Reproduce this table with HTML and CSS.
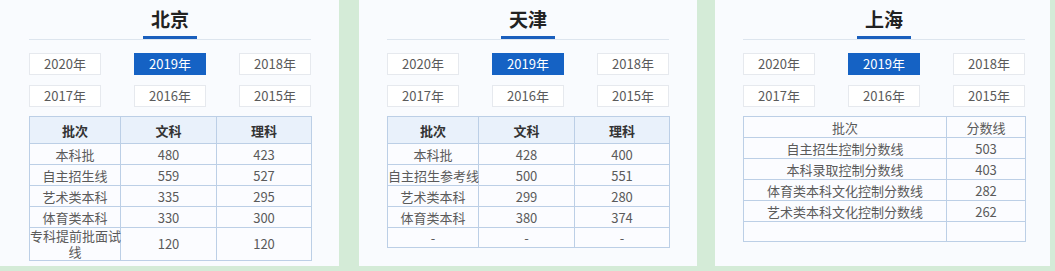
FILE: index.html
```html
<!DOCTYPE html>
<html lang="zh">
<head>
<meta charset="utf-8">
<title>分数线</title>
<link rel="stylesheet" href="styles.css">
</head>
<body>
<div class="board">
  <section class="panel p1">
    <div class="title-wrap"><h2 class="title">北京</h2></div>
    <div class="years">
      <span class="year">2020年</span><span class="year active">2019年</span><span class="year">2018年</span>
      <span class="year">2017年</span><span class="year">2016年</span><span class="year">2015年</span>
    </div>
    <table class="score three">
      <colgroup><col class="c1"><col class="c2"><col class="c3"></colgroup>
      <thead><tr><th>批次</th><th>文科</th><th>理科</th></tr></thead>
      <tbody>
        <tr><td>本科批</td><td>480</td><td>423</td></tr>
        <tr><td>自主招生线</td><td>559</td><td>527</td></tr>
        <tr><td>艺术类本科</td><td>335</td><td>295</td></tr>
        <tr><td>体育类本科</td><td>330</td><td>300</td></tr>
        <tr class="tall"><td>专科提前批面试<br>线</td><td>120</td><td>120</td></tr>
      </tbody>
    </table>
  </section>
  <section class="panel p2">
    <div class="title-wrap"><h2 class="title">天津</h2></div>
    <div class="years">
      <span class="year">2020年</span><span class="year active">2019年</span><span class="year">2018年</span>
      <span class="year">2017年</span><span class="year">2016年</span><span class="year">2015年</span>
    </div>
    <table class="score three">
      <colgroup><col class="c1"><col class="c2"><col class="c3"></colgroup>
      <thead><tr><th>批次</th><th>文科</th><th>理科</th></tr></thead>
      <tbody>
        <tr><td>本科批</td><td>428</td><td>400</td></tr>
        <tr><td>自主招生参考线</td><td>500</td><td>551</td></tr>
        <tr><td>艺术类本科</td><td>299</td><td>280</td></tr>
        <tr><td>体育类本科</td><td>380</td><td>374</td></tr>
        <tr class="dash"><td>-</td><td>-</td><td>-</td></tr>
      </tbody>
    </table>
  </section>
  <section class="panel p3">
    <div class="title-wrap"><h2 class="title">上海</h2></div>
    <div class="years">
      <span class="year">2020年</span><span class="year active">2019年</span><span class="year">2018年</span>
      <span class="year">2017年</span><span class="year">2016年</span><span class="year">2015年</span>
    </div>
    <table class="score two">
      <colgroup><col class="w1"><col class="w2"></colgroup>
      <tbody>
        <tr><td>批次</td><td>分数线</td></tr>
        <tr><td>自主招生控制分数线</td><td>503</td></tr>
        <tr><td>本科录取控制分数线</td><td>403</td></tr>
        <tr><td>体育类本科文化控制分数线</td><td>282</td></tr>
        <tr><td>艺术类本科文化控制分数线</td><td>262</td></tr>
        <tr class="empty"><td></td><td></td></tr>
      </tbody>
    </table>
  </section>
</div>
</body>
</html>
```
FILE: styles.css
```css
* { box-sizing: border-box; }
html, body {
  margin: 0;
  padding: 0;
  background: #d4ebd7;
  font-family: "Noto Sans CJK SC", "Microsoft YaHei", sans-serif;
  color: #5a5a5a;
}
.board {
  display: flex;
  align-items: flex-start;
  height: 271px;
  overflow: hidden;
}
.panel {
  background: #f9fbfe;
  height: 266px;
  padding-top: 6px;
}
.p1 { width: 339px; padding-left: 29px; }
.p2 { width: 338px; margin-left: 20px; padding-left: 28px; }
.p3 { width: 335px; margin-left: 18px; padding-left: 28px; }

.title-wrap {
  width: 282px;
  border-bottom: 1px solid #dde5ee;
  display: flex;
  justify-content: center;
}
.title {
  margin: 0;
  width: 54px;
  text-align: center;
  font-size: 19px;
  line-height: 26px;
  font-weight: bold;
  color: #222;
  padding-bottom: 4px;
  border-bottom: 3px solid #1a5fbd;
}
.years {
  width: 282px;
  margin-top: 13px;
  display: grid;
  grid-template-columns: 72px 72px 72px;
  justify-content: space-between;
  row-gap: 10px;
}
.year {
  height: 22px;
  line-height: 20px;
  border: 1px solid #e6e9ee;
  background: #fff;
  text-align: center;
  font-size: 13px;
  color: #5a5a5a;
}
.year.active {
  background: #1562c4;
  border-color: #1562c4;
  color: #fff;
}
.score {
  margin-top: 9px;
  width: 282px;
  border-collapse: collapse;
  table-layout: fixed;
  font-size: 13px;
}
.score th, .score td {
  border: 1px solid #bccfe6;
  padding: 0;
  text-align: center;
  white-space: nowrap;
  height: 21px;
  line-height: 17px;
}
.c1 { width: 91px; }
.c2 { width: 96px; }
.c3 { width: 95px; }
.w1 { width: 203px; }
.w2 { width: 79px; }
.score th {
  background: #e9f1fb;
  color: #333;
  font-weight: bold;
  height: 27px;
}
.score tr.tall td { height: 32px; line-height: 16px; }
.score tr.dash td { height: 20px; }
.score tr.empty td { height: 20px; }
.score td { background: #fbfcff; }
```
